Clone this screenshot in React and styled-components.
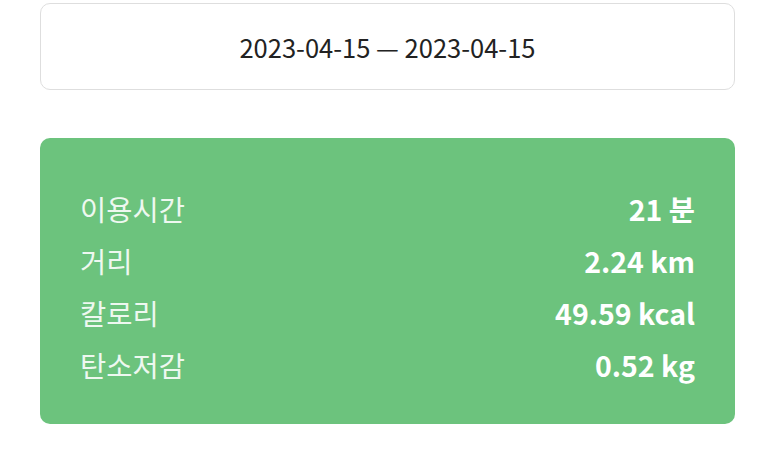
import styled, { createGlobalStyle } from 'styled-components';

const GlobalStyle = createGlobalStyle`
  * { box-sizing: border-box; }
  body {
    margin: 0;
    background: #ffffff;
    font-family: "Noto Sans CJK KR", "Noto Sans", sans-serif;
  }
`;

const Page = styled.div`
  width: 773px;
  padding: 3px 38px 0 40px;
  display: flex;
  flex-direction: column;
  gap: 48px;
`;

const DateBox = styled.div`
  height: 87px;
  border: 1px solid #dedede;
  border-radius: 10px;
  display: flex;
  align-items: center;
  justify-content: center;
  font-size: 25.5px;
  color: #222222;
`;

const SummaryCard = styled.div`
  height: 286px;
  background-color: #6cc37d;
  border-radius: 10px;
  padding: 44px 40px 33px 40px;
  display: flex;
  flex-direction: column;
`;

const Row = styled.div`
  display: flex;
  justify-content: space-between;
  align-items: center;
  height: 52.3px;
  font-size: 28.5px;
`;

const Label = styled.span`
  color: #eef8f0;
  font-weight: 400;
`;

const Value = styled.span`
  color: #ffffff;
  font-weight: 700;
`;

const stats = [
  { label: '이용시간', value: '21 분' },
  { label: '거리', value: '2.24 km' },
  { label: '칼로리', value: '49.59 kcal' },
  { label: '탄소저감', value: '0.52 kg' },
];

const App = () => {
  return (
    <>
      <GlobalStyle />
      <Page>
        <DateBox>2023-04-15 — 2023-04-15</DateBox>
        <SummaryCard>
          {stats.map((el) => (
            <Row key={el.label}>
              <Label>{el.label}</Label>
              <Value>{el.value}</Value>
            </Row>
          ))}
        </SummaryCard>
      </Page>
    </>
  );
};

export default App;
